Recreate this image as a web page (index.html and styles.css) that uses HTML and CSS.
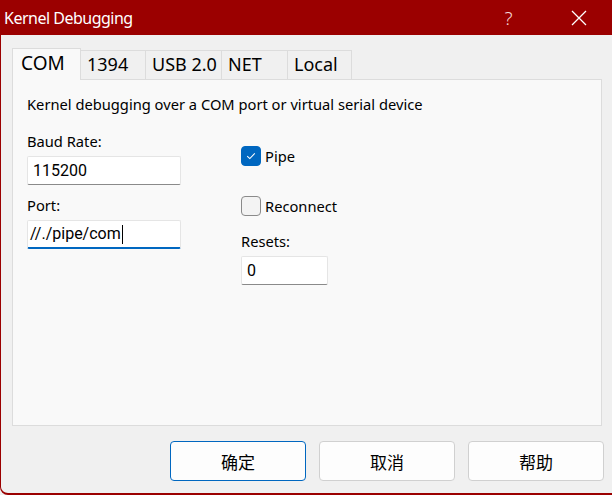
FILE: index.html
```html
<!DOCTYPE html>
<html>
<head>
<meta charset="utf-8">
<link rel="stylesheet" href="styles.css">
</head>
<body>
<div class="window">
  <div class="titlebar">
    <span class="title">Kernel Debugging</span>
    <div class="caption">
      <span class="cap help">?</span>
      <span class="cap close">
        <svg width="16" height="16" viewBox="0 0 16 16"><path d="M1 1 L15 15 M15 1 L1 15" stroke="#fff" stroke-width="1.3" fill="none"/></svg>
      </span>
    </div>
  </div>
  <div class="body">
    <div class="tabs">
      <div class="tab active w-com">COM</div>
      <div class="tab w-1394">1394</div>
      <div class="tab w-usb">USB 2.0</div>
      <div class="tab w-net">NET</div>
      <div class="tab w-local">Local</div>
    </div>
    <div class="panel">
      <p class="desc">Kernel debugging over a COM port or virtual serial device</p>
      <div class="cols">
        <div class="col left">
          <div class="label">Baud Rate:</div>
          <div class="field wide">115200</div>
          <div class="label gap">Port:</div>
          <div class="field wide focus">//./pipe/com<span class="caret"></span></div>
        </div>
        <div class="col right">
          <div class="check first">
            <span class="box on">
              <svg width="12" height="12" viewBox="0 0 12 12"><path d="M2.2 6.2 L4.8 8.6 L9.8 3.4" stroke="#fff" stroke-width="1.1" fill="none"/></svg>
            </span>
            <span>Pipe</span>
          </div>
          <div class="check second">
            <span class="box"></span>
            <span>Reconnect</span>
          </div>
          <div class="label resets">Resets:</div>
          <div class="field small">0</div>
        </div>
      </div>
    </div>
    <div class="buttons">
      <div class="btn default">确定</div>
      <div class="btn">取消</div>
      <div class="btn">帮助</div>
    </div>
  </div>
</div>
</body>
</html>
```
FILE: styles.css
```css
html, body {
  margin: 0;
  padding: 0;
  background: #f0f0f0;
}
body {
  font-family: "Segoe UI", "Noto Sans", "Liberation Sans", "Noto Sans CJK SC", sans-serif;
  color: #000;
}
.window {
  width: 612px;
  height: 495px;
  box-sizing: border-box;
  border-left: 1px solid #9b0000;
  border-bottom: 2px solid #9b0000;
  border-bottom-left-radius: 8px;
  background: #f0f0f0;
  display: flex;
  flex-direction: column;
  overflow: hidden;
}
.titlebar {
  height: 35px;
  background: #9b0000;
  display: flex;
  align-items: center;
  justify-content: space-between;
  color: #fff;
  margin-left: -1px;
}
.title {
  font-size: 16px;
  padding-left: 4px;
  letter-spacing: -0.5px;
}
.caption {
  display: flex;
  height: 35px;
}
.cap {
  width: 67px;
  height: 35px;
  display: flex;
  align-items: center;
  justify-content: center;
}
.help {
  font-size: 19px;
  font-weight: 300;
  color: #f4d9d9;
  padding-right: 3px;
}
.body {
  flex: 1;
  display: flex;
  flex-direction: column;
  padding: 13px 8px 0 11px;
}
.tabs {
  display: flex;
  align-items: flex-end;
  height: 31px;
  position: relative;
  z-index: 1;
}
.tab {
  box-sizing: border-box;
  height: 29px;
  font-size: 18px;
  line-height: 27px;
  padding-left: 6px;
  border: 1px solid #dcdcdc;
  border-bottom: none;
  border-left: none;
  background: #f0f0f0;
}
.tab.active {
  height: 32px;
  margin-bottom: -1px;
  background: #f9f9f9;
  border-left: 1px solid #dcdcdc;
  padding-left: 8px;
  line-height: 28px;
  font-size: 19px;
}
.w-com { width: 69px; }
.w-1394 { width: 65px; }
.w-usb { width: 76px; }
.w-net { width: 66px; }
.w-local { width: 64px; }
.panel {
  box-sizing: border-box;
  width: 590px;
  height: 347px;
  background: #f9f9f9;
  border: 1px solid #dcdcdc;
  padding: 14px 0 0 14px;
  font-size: 14.7px;
}
.desc {
  margin: 0;
  line-height: 20px;
}
.cols {
  display: flex;
  margin-top: 17px;
}
.col.left {
  width: 214px;
}
.label {
  line-height: 20px;
}
.label.gap {
  margin-top: 10px;
}
.field {
  box-sizing: border-box;
  height: 29px;
  margin-top: 5px;
  background: #fff;
  border: 1px solid #e5e5e5;
  border-bottom-color: #8a8a8a;
  border-radius: 2px;
  font-family: Roboto, "Noto Sans", sans-serif;
  font-size: 16px;
  line-height: 27px;
  padding-left: 5px;
}
.field.wide { width: 154px; }
.field.small { width: 87px; }
.field.focus {
  border-bottom: 2px solid #0067c0;
  line-height: 26px;
  display: flex;
  align-items: center;
  padding-left: 2px;
}
.caret {
  display: inline-block;
  width: 1px;
  height: 19px;
  background: #000;
  margin-left: 1px;
}
.check {
  display: flex;
  align-items: center;
  gap: 4px;
  height: 20px;
  line-height: 20px;
}
.check.first { margin-top: 15px; }
.check.second { margin-top: 30px; }
.box {
  box-sizing: border-box;
  width: 20px;
  height: 20px;
  border-radius: 4px;
  border: 1px solid #8a8a8a;
  background: #f3f3f3;
  display: flex;
  align-items: center;
  justify-content: center;
}
.box.on {
  background: #0067c0;
  border-color: #0067c0;
}
.label.resets {
  margin-top: 15px;
}
.buttons {
  display: flex;
  justify-content: flex-end;
  gap: 13px;
  margin-top: 15px;
}
.btn {
  box-sizing: border-box;
  width: 136px;
  height: 40px;
  background: #fdfdfd;
  border: 1px solid #d0d0d0;
  border-radius: 4px;
  display: flex;
  align-items: center;
  justify-content: center;
  font-family: "Noto Sans CJK SC", sans-serif;
  font-size: 17px;
}
.btn.default {
  border: 1px solid #0067c0;
}
```
